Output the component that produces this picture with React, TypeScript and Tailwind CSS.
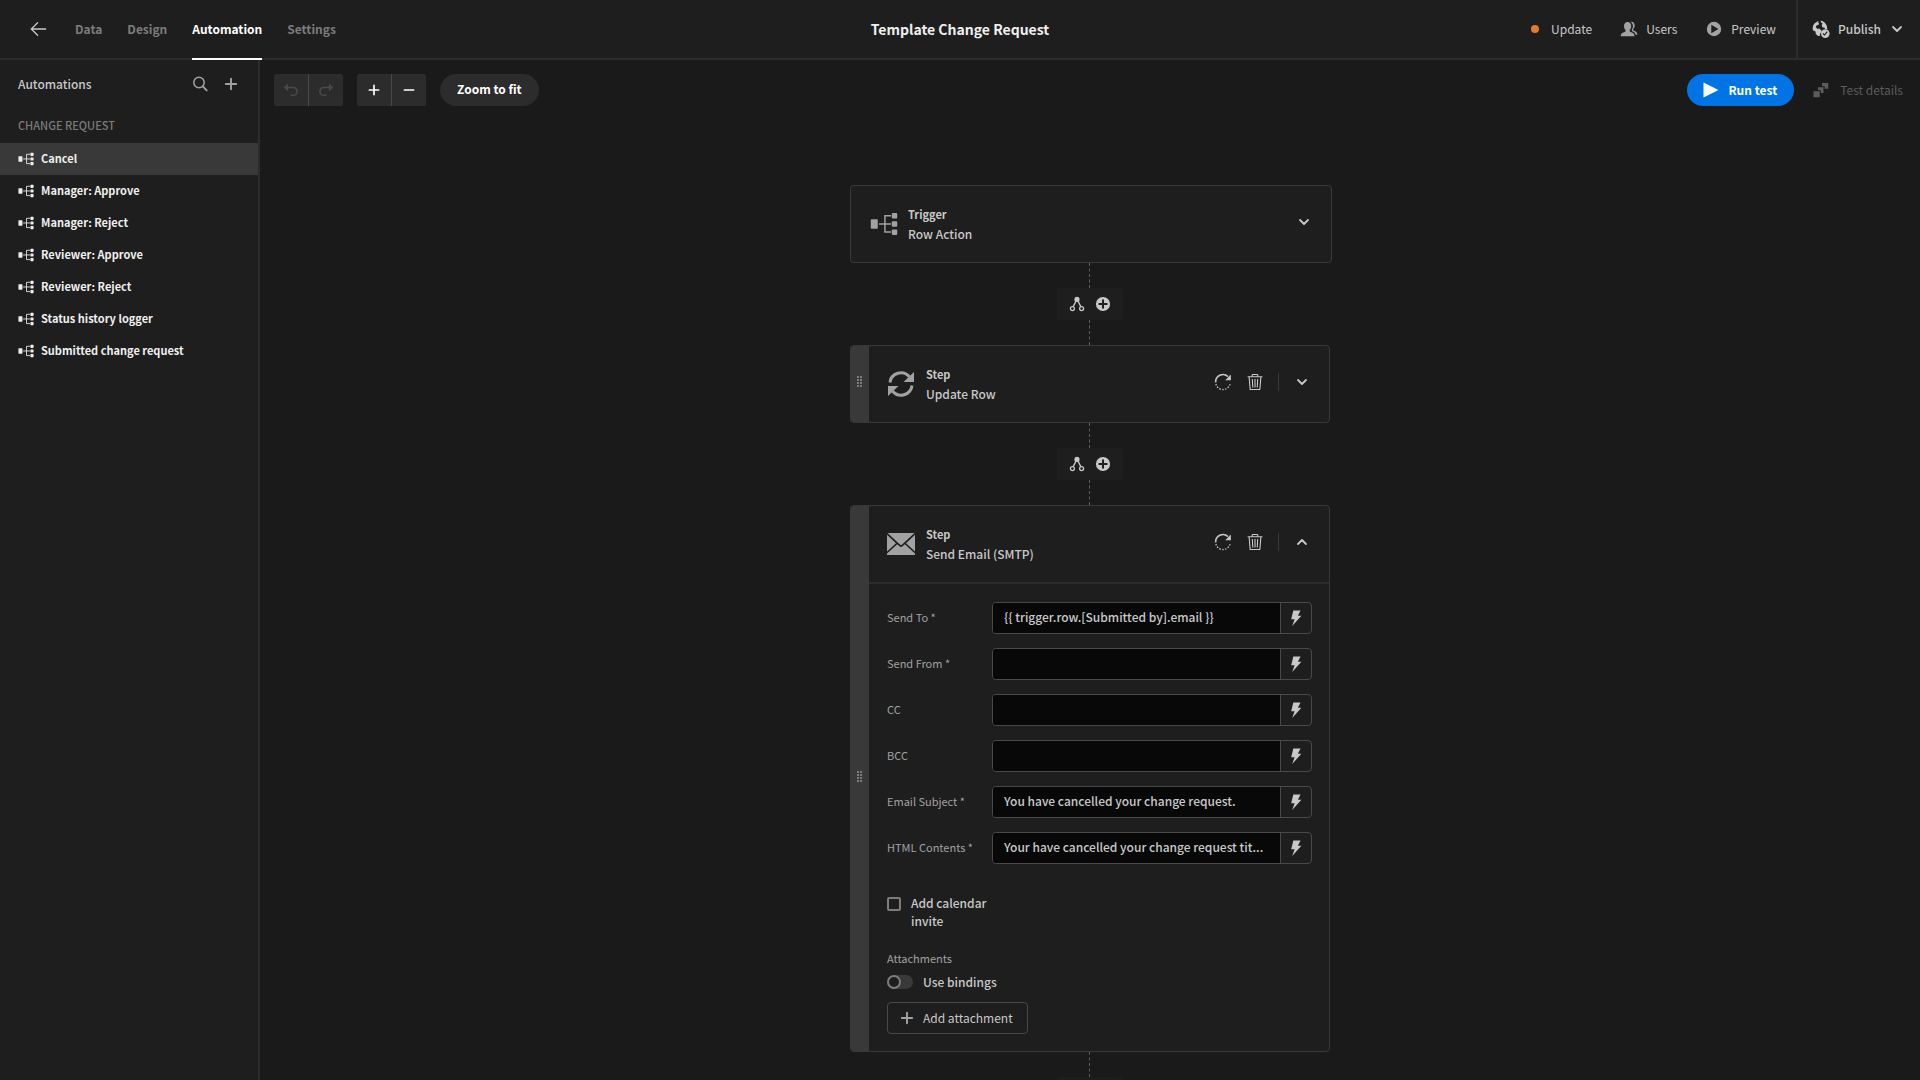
import { useState, type ReactNode } from "react";

type IconProps = { className?: string };

function Svg({ className, size = 18, children }: { className?: string; size?: number; children: ReactNode }) {
  return (
    <svg viewBox={`0 0 ${size} ${size}`} fill="currentColor" aria-hidden="true" className={`shrink-0 ${className ?? ""}`}>
      {children}
    </svg>
  );
}

function ArrowLeftIcon({ className }: IconProps) {
  return (
    <Svg className={className}>
      <path d="M2.3 9h14.4M8.6 2.7L2.3 9l6.3 6.3" fill="none" stroke="currentColor" strokeWidth="1.3" strokeLinecap="round" />
    </Svg>
  );
}

function SearchIcon({ className }: IconProps) {
  return (
    <Svg className={className}>
      <circle cx="8" cy="7.5" r="5.2" fill="none" stroke="currentColor" strokeWidth="1.5" />
      <path d="M11.8 11.4l3.9 4" stroke="currentColor" strokeWidth="1.9" strokeLinecap="round" />
    </Svg>
  );
}

function PlusIcon({ className }: IconProps) {
  return (
    <Svg className={className}>
      <path d="M9 3.800v10.400M3.800 9h10.400" stroke="currentColor" strokeWidth="1.900" strokeLinecap="round" />
    </Svg>
  );
}

function MinusIcon({ className }: IconProps) {
  return (
    <Svg className={className}>
      <path d="M3.800 9h10.400" stroke="currentColor" strokeWidth="1.900" strokeLinecap="round" />
    </Svg>
  );
}

function UndoIcon({ className }: IconProps) {
  return (
    <Svg className={className}>
      <path d="M5 6.5h6.2a3.900 3.900 0 0 1 0 7.800H9" fill="none" stroke="currentColor" strokeWidth="1.600" strokeLinecap="round" />
      <path d="M6 2.600v7.800L1.800 6.500z" />
    </Svg>
  );
}

function ChevronIcon({ className }: IconProps) {
  return (
    <Svg className={className} size={12}>
      <path d="M2 4l4 4 4-4" fill="none" stroke="currentColor" strokeWidth="1.800" strokeLinecap="round" strokeLinejoin="round" />
    </Svg>
  );
}

function FlowIcon({ className }: IconProps) {
  return (
    <Svg className={className} size={36}>
      <rect x="1" y="12" width="9" height="12" rx="1" />
      <rect x="28" y="4" width="7" height="7" rx="1" />
      <rect x="28" y="14.5" width="7" height="7" rx="1" />
      <rect x="28" y="25" width="7" height="7" rx="1" />
      <path d="M11.5 17.9H27M27 7.4h-7.8v21H27" fill="none" stroke="currentColor" strokeWidth="1.9" />
    </Svg>
  );
}

function UsersIcon({ className }: IconProps) {
  return (
    <Svg className={className}>
      <path d="M7.600 1.900c2.300 0 3.600 1.700 3.600 4 0 1.600-.6 3-1.500 4v1.200c0 .4.300.6.800.8 2.300.7 3.900 1.500 3.900 3.500v.8H.8v-.8c0-2 1.600-2.800 3.900-3.500.5-.2.800-.4.800-.8V9.900C4.600 8.900 4 7.500 4 5.900c0-2.300 1.300-4 3.600-4z" />
      <path d="M10.700 1.900c2.300-.4 4 1.200 4 3.600 0 1.500-.6 2.700-1.400 3.500v1c0 .3.200.6.600.7 2 .6 3.400 1.500 3.400 3.400v.6h-1.700c-.2-2-1.500-3-3.800-3.800V9.800c.7-1 1.100-2.400 1.100-3.900 0-1.700-.8-3.200-2.200-4z" />
    </Svg>
  );
}

function PlayCircleIcon({ className }: IconProps) {
  return (
    <Svg className={className}>
      <path fillRule="evenodd" d="M9 1.800a7.200 7.200 0 1 0 0 14.400A7.200 7.200 0 0 0 9 1.800zM6.300 4.700v8.600L13.400 9z" />
    </Svg>
  );
}

function PublishIcon({ className }: IconProps) {
  return (
    <Svg className={className}>
      <path d="M7 .9C3.500 1.500.7 4.600.7 8.400c0 .7.100 1.300.3 1.900l2.800 1.500-.3 1.600 2.200 2.300c.7.200 1.400.300 2.100.300.100-2.200.800-3.700 2.200-4.800L7.400 8.600 5.600 9 3.800 7.300l.6-1.700 2.300-.8.300-1.800-1.500-.8z" />
      <path d="M8.600.8l.4 1.700 1.700 1-1 1.500.6 2.300 2.300.5.400 1.200c.9 0 1.600.1 2.300.4C15.400 4.700 12.600 1.200 8.600.8z" />
      <path fillRule="evenodd" d="M13.300 9.300a4.300 4.300 0 1 0 0 8.600 4.300 4.300 0 0 0 0-8.600zm-.8 6.500l-1.900-1.900.8-.8 1 1.100 2.400-2.900.9.700z" />
    </Svg>
  );
}

function PlayIcon({ className }: IconProps) {
  return (
    <Svg className={className}>
      <path d="M2.500 1.500v15L16.500 9.600a.6.600 0 0 0 0-1.100z" />
    </Svg>
  );
}

function StepsIcon({ className }: IconProps) {
  return (
    <Svg className={className}>
      <rect x="1.500" y="10.300" width="6.200" height="6" rx=".5" />
      <path d="M6 6.300h5.500v5.800H8.700V9.300H6z" />
      <path d="M10 2h6.300v5.800h-3.700V5.300H10z" />
    </Svg>
  );
}

function BranchIcon({ className }: IconProps) {
  return (
    <Svg className={className}>
      <circle cx="9" cy="4.400" r="2.600" />
      <path d="M8.300 5.500L5.200 11.600M9.700 5.500l3.100 6.100" stroke="currentColor" strokeWidth="1.400" />
      <circle cx="4.400" cy="13.600" r="2" fill="none" stroke="currentColor" strokeWidth="1.300" />
      <circle cx="13.600" cy="13.600" r="2" fill="none" stroke="currentColor" strokeWidth="1.300" />
    </Svg>
  );
}

function PlusCircleIcon({ className }: IconProps) {
  return (
    <Svg className={className}>
      <path fillRule="evenodd" d="M9 1.900a7.100 7.100 0 1 0 0 14.200A7.100 7.100 0 0 0 9 1.900zM8 4.500h2V8h3.500v2H10v3.500H8V10H4.500V8H8z" />
    </Svg>
  );
}

function RefreshIcon({ className }: IconProps) {
  return (
    <Svg className={className} size={28}>
      <path d="M3 12.500A11 11 0 0 1 22.300 6.700" fill="none" stroke="currentColor" strokeWidth="3" />
      <path d="M27 2v10h-10.500z" />
      <path d="M25 15.500A11 11 0 0 1 5.700 21.300" fill="none" stroke="currentColor" strokeWidth="3" />
      <path d="M1 26V16h10.500z" />
    </Svg>
  );
}

function RotateIcon({ className }: IconProps) {
  return (
    <Svg className={className}>
      <path d="M1.700 9.400A7.300 7.300 0 0 1 14 3.600" fill="none" stroke="currentColor" strokeWidth="1.600" />
      <path d="M16.900 1.400v5.800h-5.600z" />
      <path d="M1.900 11a7.300 7.300 0 0 0 14.300-.6" fill="none" stroke="currentColor" strokeWidth="1.200" strokeDasharray="1.500 1.400" />
    </Svg>
  );
}

function TrashIcon({ className }: IconProps) {
  return (
    <Svg className={className}>
      <path d="M1.600 3.700h14.800M6.200 3.500V2.300c0-.5.300-.8.800-.8h4c.5 0 .8.300.8.800v1.200M3.100 4l1.100 12.500h9.600L14.900 4M6.300 6l.5 8.500M9 6v8.500M11.700 6l-.5 8.500" fill="none" stroke="currentColor" strokeWidth="1.100" />
    </Svg>
  );
}

function MailIcon({ className }: IconProps) {
  return (
    <Svg className={className} size={28}>
      <path d="M.5 3h27L14.800 14.700a1.200 1.200 0 0 1-1.600 0z" />
      <path d="M0 4.800L9 13.200 0 21.400zM28 4.800L19 13.200l9 8.200z" />
      <path d="M10.200 14.300l2.200 2a2.400 2.400 0 0 0 3.200 0l2.200-2L28 23.600V25H0v-1.400z" />
    </Svg>
  );
}

function BoltIcon({ className }: IconProps) {
  return (
    <Svg className={className}>
      <path d="M6.300 1.500h7.200l-2.600 5.300h3.500L5.200 17 7.600 10.200H4.200z" />
    </Svg>
  );
}

function GripIcon() {
  return (
    <svg viewBox="0 0 6 12" fill="currentColor" aria-hidden="true" className="mb-1 h-3 w-1.5 text-[#7c7c7c]">
      {[0, 3, 6, 9].map((y) => (
        <g key={y}>
          <rect x="0" y={y} width="2" height="2" />
          <rect x="3" y={y} width="2" height="2" />
        </g>
      ))}
    </svg>
  );
}

function Header() {
  const tabs = ["Data", "Design", "Automation", "Settings"];
  return (
    <header className="grid h-[60px] grid-cols-[1fr_auto_1fr] border-b-2 border-[#2c2c2c] bg-[#1e1e1e]">
      <div className="flex items-center pl-[29px]">
        <button type="button" aria-label="Back" className="text-[#c8c8c8]">
          <ArrowLeftIcon className="size-[18px]" />
        </button>
        <nav className="-mb-0.5 ml-7 flex h-[60px] gap-[25px]">
          {tabs.map((tab) => (
            <a
              key={tab}
              href={`#${tab.toLowerCase()}`}
              className={
                tab === "Automation"
                  ? "flex items-center border-b-2 border-white text-xs font-bold text-white"
                  : "flex items-center border-b-2 border-transparent text-xs font-bold text-[#7c7c7c]"
              }
            >
              {tab}
            </a>
          ))}
        </nav>
      </div>
      <h1 className="self-center text-sm leading-5 font-bold text-[#efefef]">Template Change Request</h1>
      <div className="flex items-center justify-end text-xs text-[#c8c8c8]">
        <button type="button" className="mr-7 flex items-center gap-3">
          <span className="size-2 rounded-full bg-[#e47a2e]" />
          Update
        </button>
        <button type="button" className="mr-7 flex items-center gap-2">
          <UsersIcon className="size-[18px] text-[#a2a2a2]" />
          Users
        </button>
        <button type="button" className="mr-5 flex items-center gap-2">
          <PlayCircleIcon className="size-[18px] text-[#a2a2a2]" />
          Preview
        </button>
        <button type="button" className="flex h-full items-center gap-2 border-l-2 border-[#2c2c2c] pr-[17px] pl-[14px] font-medium">
          <PublishIcon className="size-[18px]" />
          Publish
          <ChevronIcon className="ml-0.5 size-3" />
        </button>
      </div>
    </header>
  );
}

function Sidebar() {
  const items = [
    "Cancel",
    "Manager: Approve",
    "Manager: Reject",
    "Reviewer: Approve",
    "Reviewer: Reject",
    "Status history logger",
    "Submitted change request",
  ];
  const [selected, setSelected] = useState("Cancel");
  return (
    <aside className="w-[260px] shrink-0 border-r-2 border-[#2c2c2c] bg-[#1e1e1e]">
      <div className="flex h-12 items-center pr-[18px] pl-[18px] text-[#c8c8c8]">
        <h2 className="flex-1 text-xs font-medium">Automations</h2>
        <button type="button" aria-label="Search" className="mr-[13px] text-[#a2a2a2]">
          <SearchIcon className="size-[18px]" />
        </button>
        <button type="button" aria-label="New automation" className="text-[#a2a2a2]">
          <PlusIcon className="size-[18px]" />
        </button>
      </div>
      <h3 className="flex h-[35px] items-center pb-px pl-[18px] text-[11px] font-medium text-[#7c7c7c] uppercase">Change Request</h3>
      <ul>
        {items.map((item) => (
          <li key={item}>
            <button
              type="button"
              onClick={() => setSelected(item)}
              className={
                item === selected
                  ? "flex h-8 w-full items-center gap-[7px] bg-[#393939] pb-px pl-[18px] text-[11px] font-bold text-[#efefef]"
                  : "flex h-8 w-full items-center gap-[7px] pb-px pl-[18px] text-[11px] font-bold text-[#efefef]"
              }
            >
              <FlowIcon className="size-4" />
              {item}
            </button>
          </li>
        ))}
      </ul>
    </aside>
  );
}

function Toolbar() {
  return (
    <div className="flex items-center justify-between pt-[14px] pr-[17px] pl-[14px]">
      <div className="flex items-center gap-[14px]">
        <div className="flex h-8 gap-px overflow-hidden rounded bg-[#494949] text-[#494949]">
          <button type="button" disabled aria-label="Undo" className="flex w-[34px] items-center justify-center bg-[#2c2c2c]">
            <UndoIcon className="size-[18px]" />
          </button>
          <button type="button" disabled aria-label="Redo" className="flex w-[34px] items-center justify-center bg-[#2c2c2c]">
            <UndoIcon className="size-[18px] -scale-x-100" />
          </button>
        </div>
        <div className="flex h-8 gap-px overflow-hidden rounded bg-[#494949] text-white">
          <button type="button" aria-label="Zoom in" className="flex w-[34px] items-center justify-center bg-[#2c2c2c]">
            <PlusIcon className="size-4" />
          </button>
          <button type="button" aria-label="Zoom out" className="flex w-[34px] items-center justify-center bg-[#2c2c2c]">
            <MinusIcon className="size-4" />
          </button>
        </div>
        <button type="button" className="h-8 rounded-full bg-[#2c2c2c] px-[17px] pb-0.5 text-xs font-bold text-white">
          Zoom to fit
        </button>
      </div>
      <div className="flex items-center gap-[18px]">
        <button type="button" className="flex h-8 items-center gap-[9px] rounded-full bg-[#0074e4] pr-[17px] pl-[14px] text-xs font-bold text-white">
          <PlayIcon className="size-[18px]" />
          Run test
        </button>
        <button type="button" disabled className="flex h-8 items-center gap-2.5 text-xs text-[#5c5c5c]">
          <StepsIcon className="size-[18px]" />
          Test details
        </button>
      </div>
    </div>
  );
}

function Line() {
  return <div className="h-[25px] w-0.5 border-l border-dashed border-[#5c5c5c]" />;
}

function Connector() {
  return (
    <div className="flex w-[480px] flex-col items-center">
      <Line />
      <div className="flex h-8 w-[66px] items-center justify-center gap-2 rounded bg-[#1e1e1e] text-[#c8c8c8]">
        <button type="button" aria-label="Add branch">
          <BranchIcon className="size-[18px]" />
        </button>
        <button type="button" aria-label="Add step">
          <PlusCircleIcon className="size-[18px]" />
        </button>
      </div>
      <Line />
    </div>
  );
}

function BlockTitle({ kind, name }: { kind: string; name: string }) {
  return (
    <div className="flex-1 text-[#c8c8c8]">
      <div className="text-[11px] leading-5 font-bold">{kind}</div>
      <div className="text-xs leading-5 font-medium">{name}</div>
    </div>
  );
}

function StepCard({ icon, name, open = false, children }: { icon: ReactNode; name: string; open?: boolean; children?: ReactNode }) {
  return (
    <section className="flex w-[480px] overflow-hidden rounded border border-[#393939] bg-[#1e1e1e]">
      <div className="flex w-[18px] shrink-0 items-center justify-center bg-[#393939]">
        <GripIcon />
      </div>
      <div className="min-w-0 flex-1">
        <div className="flex h-[76px] items-center pr-[21px] pl-[18px]">
          <span className="mr-[11px] text-[#a2a2a2]">{icon}</span>
          <BlockTitle kind="Step" name={name} />
          <div className="-mt-1 flex items-center text-[#c8c8c8]">
            <button type="button" aria-label="Reset step">
              <RotateIcon className="size-[18px]" />
            </button>
            <button type="button" aria-label="Delete step" className="ml-[14px]">
              <TrashIcon className="size-[18px]" />
            </button>
            <span className="mr-[17px] ml-[14px] h-[18px] w-px bg-[#393939]" />
            <button type="button" aria-label={open ? "Collapse step" : "Expand step"}>
              <ChevronIcon className={open ? "size-3 rotate-180" : "size-3"} />
            </button>
          </div>
        </div>
        {children}
      </div>
    </section>
  );
}

const fields = [
  { id: "to", label: "Send To *", value: "{{ trigger.row.[Submitted by].email }}" },
  { id: "from", label: "Send From *", value: "" },
  { id: "cc", label: "CC", value: "" },
  { id: "bcc", label: "BCC", value: "" },
  { id: "subject", label: "Email Subject *", value: "You have cancelled your change request." },
  { id: "html", label: "HTML Contents *", value: "Your have cancelled your change request tit..." },
];

function EmailForm() {
  return (
    <form className="border-t-2 border-[#2c2c2c] p-[18px] pr-[17px] pb-[17px]">
      <div className="flex flex-col gap-[14px]">
        {fields.map((field) => (
          <div key={field.id} className="flex items-center">
            <label htmlFor={field.id} className="w-[105px] shrink-0 pb-0.5 text-[11px] text-[#a2a2a2]">
              {field.label}
            </label>
            <div className="flex h-8 min-w-0 flex-1 overflow-hidden rounded border border-[#494949]">
              <input
                id={field.id}
                type="text"
                defaultValue={field.value}
                className="min-w-0 flex-1 bg-[#080808] pb-0.5 pl-[11px] text-xs font-medium text-ellipsis text-[#c8c8c8] outline-none"
              />
              <button
                type="button"
                aria-label={`Bindings for ${field.label}`}
                className="flex w-[31px] items-center justify-center border-l border-[#494949] text-[#c8c8c8]"
              >
                <BoltIcon className="size-[18px]" />
              </button>
            </div>
          </div>
        ))}
      </div>
      <label className="mt-[30px] flex w-[110px] gap-[10px] text-xs leading-[18px] font-medium text-[#c8c8c8]">
        <input type="checkbox" className="mt-[3px] size-[14px] shrink-0 appearance-none rounded-xs border-2 border-[#7c7c7c] checked:bg-[#7c7c7c]" />
        Add calendar invite
      </label>
      <div className="mt-[19px] text-[11px] leading-[18px] text-[#a2a2a2]">Attachments</div>
      <label className="mt-[6px] flex items-center gap-[10px] text-xs leading-[18px] font-medium text-[#c8c8c8]">
        <input
          type="checkbox"
          role="switch"
          className="h-[14px] w-[26px] appearance-none rounded-full bg-[#393939] before:block before:size-[14px] before:rounded-full before:border-2 before:border-[#7c7c7c] before:bg-[#1e1e1e] checked:before:ml-3"
        />
        Use bindings
      </label>
      <button type="button" className="mt-[11px] flex h-8 items-center gap-[7px] rounded border border-[#494949] pr-[14px] pl-[10px] text-xs text-[#c8c8c8]">
        <PlusIcon className="size-[18px] text-[#a2a2a2]" />
        Add attachment
      </button>
    </form>
  );
}

export default function App() {
  return (
    <div className='flex h-screen flex-col overflow-hidden bg-[#1a1a1a] font-["Noto_Sans_CJK_SC",sans-serif]'>
      <Header />
      <div className="flex min-h-0 flex-1">
        <Sidebar />
        <main className="min-w-0 flex-1 overflow-hidden">
          <Toolbar />
          <div className="mx-auto flex w-[480px] flex-col pt-[79px]">
            <section className="flex h-[78px] w-[482px] items-center rounded border border-[#393939] bg-[#1e1e1e] pr-[21px] pl-[19px]">
              <FlowIcon className="mr-[10px] size-7 text-[#a2a2a2]" />
              <BlockTitle kind="Trigger" name="Row Action" />
              <button type="button" aria-label="Expand trigger" className="-mt-1 text-[#c8c8c8]">
                <ChevronIcon className="size-3" />
              </button>
            </section>
            <Connector />
            <StepCard icon={<RefreshIcon className="size-7" />} name="Update Row" />
            <Connector />
            <StepCard icon={<MailIcon className="size-7" />} name="Send Email (SMTP)" open>
              <EmailForm />
            </StepCard>
            <Connector />
          </div>
        </main>
      </div>
    </div>
  );
}
